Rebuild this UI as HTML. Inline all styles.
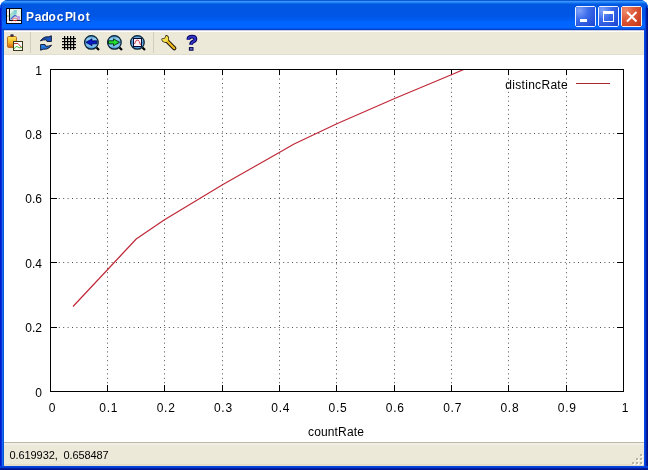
<!DOCTYPE html>
<html><head><meta charset="utf-8">
<style>
html,body{margin:0;padding:0;background:#fff;width:648px;height:470px;overflow:hidden}
svg{display:block;position:absolute;left:0;top:0;will-change:transform}
text{font-family:"Liberation Sans",sans-serif}
</style></head>
<body>
<svg width="648" height="470" viewBox="0 0 648 470">
<defs>
<linearGradient id="tg" x1="0" y1="0" x2="0" y2="30" gradientUnits="userSpaceOnUse">
<stop offset="0" stop-color="#0A5AD8"/>
<stop offset="0.0333" stop-color="#0A5AD8"/>
<stop offset="0.05" stop-color="#3A95FF"/>
<stop offset="0.0833" stop-color="#2282F8"/>
<stop offset="0.1167" stop-color="#0A6AEA"/>
<stop offset="0.15" stop-color="#0058E2"/>
<stop offset="0.5" stop-color="#0055E5"/>
<stop offset="0.68" stop-color="#005EF2"/>
<stop offset="0.72" stop-color="#0064FF"/>
<stop offset="0.92" stop-color="#0064FF"/>
<stop offset="0.95" stop-color="#0058F0"/>
<stop offset="0.97" stop-color="#0842C4"/>
<stop offset="1" stop-color="#0842C4"/>
</linearGradient>
<radialGradient id="bb" cx="0.2" cy="0.2" r="1" gradientUnits="objectBoundingBox">
<stop offset="0" stop-color="#7EA2FA"/>
<stop offset="0.45" stop-color="#3D6CEB"/>
<stop offset="1" stop-color="#1C48D4"/>
</radialGradient>
<radialGradient id="cb" cx="0.2" cy="0.2" r="1" gradientUnits="objectBoundingBox">
<stop offset="0" stop-color="#F08A6C"/>
<stop offset="0.45" stop-color="#DD5A38"/>
<stop offset="1" stop-color="#C8381A"/>
</radialGradient>
<linearGradient id="clip" x1="0" y1="0" x2="0" y2="1">
<stop offset="0" stop-color="#FAE858"/>
<stop offset="0.55" stop-color="#F2B428"/>
<stop offset="1" stop-color="#D86018"/>
</linearGradient>
<linearGradient id="rf1" x1="0" y1="0" x2="1" y2="1">
<stop offset="0" stop-color="#1A4AA0"/>
<stop offset="1" stop-color="#1C5CD0"/>
</linearGradient>
<linearGradient id="rf2" x1="0" y1="0" x2="1" y2="1">
<stop offset="0" stop-color="#3090F0"/>
<stop offset="1" stop-color="#1848B0"/>
</linearGradient>
<linearGradient id="lens" x1="0" y1="0" x2="0" y2="1">
<stop offset="0" stop-color="#2E7CC0"/>
<stop offset="0.25" stop-color="#9AD4F4"/>
<stop offset="0.5" stop-color="#4A98D8"/>
<stop offset="0.75" stop-color="#88C8F0"/>
<stop offset="1" stop-color="#3080C8"/>
</linearGradient>
</defs>
<!-- window body -->
<path d="M0,8 A8,8 0 0 1 8,0 L640,0 A8,8 0 0 1 648,8 L648,470 L0,470 Z" fill="#0855DD"/>
<path d="M0,8 A8,8 0 0 1 8,0 L640,0 A8,8 0 0 1 648,8 L648,30 L0,30 Z" fill="url(#tg)"/>
<!-- left border -->
<rect x="0" y="8" width="1" height="462" fill="#0019CF"/>
<rect x="1" y="5" width="1" height="465" fill="#0831D9"/>
<rect x="2" y="30" width="1" height="440" fill="#166AEE"/>
<rect x="3" y="30" width="1" height="440" fill="#0855DD"/>
<!-- right border -->
<rect x="644" y="30" width="1" height="440" fill="#0848E0"/>
<rect x="645" y="8" width="1" height="462" fill="#003BDA"/>
<rect x="646" y="6" width="1" height="464" fill="#001EA0"/>
<rect x="647" y="8" width="1" height="462" fill="#00138C"/>
<!-- bottom border -->
<rect x="0" y="466" width="648" height="1" fill="#0848E0"/>
<rect x="0" y="467" width="648" height="1" fill="#003BDA"/>
<rect x="0" y="468" width="648" height="1" fill="#001EA0"/>
<rect x="0" y="469" width="648" height="1" fill="#00138C"/>

<!-- toolbar -->
<rect x="4" y="30" width="640" height="25" fill="#ECE9D8"/>
<rect x="4" y="30" width="640" height="1" fill="#C8CCE0"/>
<rect x="4" y="31" width="640" height="1" fill="#FFFFFF"/>
<rect x="4" y="54" width="640" height="1" fill="#E2DFD0"/>
<!-- plot area -->
<rect x="4" y="55" width="640" height="387" fill="#FFFFFF"/>
<!-- status bar -->
<rect x="4" y="442" width="640" height="24" fill="#ECE9D8"/>
<rect x="4" y="442" width="640" height="1" fill="#BDB9A6"/>
<rect x="4" y="443" width="640" height="2" fill="#F2F0E6"/>
<rect x="4" y="464" width="640" height="2" fill="#E2DCC8"/>

<!-- title icon -->
<rect x="6.5" y="8.5" width="15" height="15" fill="#FAF4F6" stroke="#000818"/>
<rect x="10" y="9" width="11" height="11" fill="#E4F2E8"/>
<rect x="7" y="9" width="2" height="13" fill="#F4E0E8"/>
<rect x="7" y="10" width="1" height="1" fill="#FFFFFF"/><rect x="7" y="13" width="1" height="2" fill="#FFFFFF"/><rect x="7" y="17" width="1" height="2" fill="#FFFFFF"/>
<rect x="7" y="15" width="2" height="2" fill="#C8E0A0"/>
<path d="M10,19 L10,14 L14,10 L17,10 L17,14 L14,17 Z" fill="#A8E0D0"/>
<path d="M14,10 L17,10 L16,14 L13,15 Z" fill="#80D0D8"/>
<path d="M10.5,19.5 L13,17 L15,15.5 L17,16.5 L19.5,19" stroke="#4858D0" stroke-width="1.1" fill="none"/>
<path d="M16.5,16 L20,16 L20,20 L17.5,20 Z" fill="#C0A0E0"/>
<path d="M12,19.5 L15,18 L18,19.5" stroke="#E07080" stroke-width="1" fill="none"/>
<rect x="9" y="9" width="1" height="14" fill="#000"/>
<rect x="9" y="20" width="12" height="1" fill="#101010"/>
<rect x="13" y="20" width="4" height="1" fill="#C02020"/>
<rect x="7" y="21" width="14" height="2" fill="#F8F4FA"/>
<rect x="11" y="21" width="1" height="1" fill="#E0D0F0"/><rect x="15" y="21" width="1" height="1" fill="#F0D0D0"/>

<!-- title text -->
<text x="27.10 35.85 42.50 49.50 57.80 66.00 73.70 78.50 86.80" y="21.5" font-size="12" font-weight="bold" fill="#0A2A80" opacity="0.6">PadocPlot</text>
<text x="26.10 34.85 41.50 48.50 56.80 65.00 72.70 77.50 85.80" y="20.5" font-size="12" font-weight="bold" fill="#FFFFFF">PadocPlot</text>

<!-- title buttons -->
<g>
<path d="M576.5,6.5 h18 l1,1 v18 l-1,1 h-18 l-1,-1 v-18 z" fill="url(#bb)" stroke="#EAF2FF"/>
<rect x="580" y="19" width="7" height="3" fill="#FFFFFF"/>
<path d="M599.5,6.5 h18 l1,1 v18 l-1,1 h-18 l-1,-1 v-18 z" fill="url(#bb)" stroke="#EAF2FF"/>
<rect x="603.5" y="11.5" width="10" height="10" fill="none" stroke="#FFFFFF"/>
<rect x="603" y="11" width="11" height="3" fill="#FFFFFF"/>
<path d="M622.5,6.5 h18 l1,1 v18 l-1,1 h-18 l-1,-1 v-18 z" fill="url(#cb)" stroke="#F4F0F0"/>
<path d="M627,12 L636.5,21.5 M636.5,12 L627,21.5" stroke="#FFFFFF" stroke-width="2"/>
</g>

<!-- toolbar separators -->
<rect x="30" y="32" width="1" height="21" fill="#D2CEBD"/>
<rect x="153" y="32" width="1" height="21" fill="#D2CEBD"/>

<!-- icon 1 clipboard+chart -->
<rect x="7.5" y="36.5" width="9" height="11" rx="1.2" fill="url(#clip)" stroke="#B06818" stroke-width="0.9"/>
<rect x="10.3" y="34.3" width="3.4" height="2.4" rx="1" fill="#3A2A48"/>
<rect x="13.5" y="41.5" width="9" height="9" fill="#FFFFFF" stroke="#3A3A18"/>
<path d="M14,43.5 L18,43.5 L22,48" stroke="#C04030" fill="none"/>
<path d="M14,49 Q16,45 18,47 Q20,49 22,47" stroke="#40C040" fill="none"/>

<!-- icon 2 refresh -->
<path d="M40.3,40.8 L43,38.2 Q45,36.4 48.5,36.8 L51.4,35.8 L51.4,41.5 L47,41.5 L46.3,39.8 Q43.5,39.6 40.3,40.8 Z" fill="url(#rf1)" stroke="#0A1430" stroke-width="0.9" stroke-linejoin="round"/>
<path d="M51.7,45.2 L49,47.8 Q47,49.6 43.5,49.2 L40.6,50.2 L40.6,44.5 L45,44.5 L45.7,46.2 Q48.5,46.4 51.7,45.2 Z" fill="url(#rf2)" stroke="#0A1430" stroke-width="0.9" stroke-linejoin="round"/>

<!-- icon 3 grid -->
<g fill="#000000">
<rect x="64" y="36" width="1.2" height="14"/><rect x="67" y="36" width="1.2" height="14"/><rect x="70" y="36" width="1.2" height="14"/><rect x="73" y="36" width="1.2" height="14"/>
<rect x="62" y="38" width="14" height="1.2"/><rect x="62" y="41" width="14" height="1.2"/><rect x="62" y="44" width="14" height="1.2"/><rect x="62" y="47" width="14" height="1.2"/>
</g>

<!-- icon 4 zoom back -->
<path d="M96.5,47.5 L99,50" stroke="#000" stroke-width="2.2"/>
<circle cx="91.4" cy="42.4" r="6.8" fill="url(#lens)" stroke="#0C2438" stroke-width="1.3"/>
<path d="M86,42.3 L92,38.8 L92,40.8 L96.8,40.8 L96.8,43.8 L92,43.8 L92,45.8 Z" fill="#0818C8" stroke="#000850" stroke-width="0.7"/>

<!-- icon 5 zoom forward -->
<path d="M119.5,47.5 L122,50" stroke="#000" stroke-width="2.2"/>
<circle cx="114.4" cy="42.4" r="6.8" fill="url(#lens)" stroke="#0C2438" stroke-width="1.3"/>
<path d="M119.4,42.3 L113.5,38.8 L113.5,40.8 L108.5,40.8 L108.5,43.8 L113.5,43.8 L113.5,45.8 Z" fill="#20E030" stroke="#002000" stroke-width="0.8"/>

<!-- icon 6 zoom box -->
<path d="M142.5,47.5 L145,50" stroke="#000" stroke-width="2.2"/>
<circle cx="137.4" cy="42.4" r="6.8" fill="url(#lens)" stroke="#0C2438" stroke-width="1.3"/>
<rect x="133.5" y="38.5" width="8" height="8" fill="#FFF0F4" stroke="#000838" stroke-width="1"/>
<path d="M134.5,44 Q136,39 138,40 Q139.5,41 140.5,45" stroke="#C03040" fill="none" stroke-width="0.9"/>

<!-- icon 7 wrench -->
<g stroke-linecap="round" stroke-linejoin="round">
<path d="M167.3,41.2 L174.3,48.2" stroke="#1A1200" stroke-width="4.2"/>
<path d="M166.08,35.72 A3.2,3.2 0 1 1 162.03,39.25 L165.0,38.6 Z" fill="#F4DC40" stroke="#1A1200" stroke-width="1.3"/>
<path d="M166.5,40.4 L174.3,48.2" stroke="#EDB820" stroke-width="2.2"/>
<path d="M166.08,35.72 A3.2,3.2 0 1 1 162.03,39.25 L165.0,38.6 Z" fill="#F6E048"/>
</g>

<!-- icon 8 question -->
<path d="M188.5,39.8 L188.5,38.6 Q188.8,36.6 192,36.6 Q195.4,36.6 195.4,39 Q195.4,40.6 193.2,41.6 Q191.1,42.6 191.1,44.8" stroke="#000060" stroke-width="3.8" fill="none"/>
<path d="M188.5,39.8 L188.5,38.6 Q188.8,36.6 192,36.6 Q195.4,36.6 195.4,39 Q195.4,40.6 193.2,41.6 Q191.1,42.6 191.1,44.8" stroke="#3636C8" stroke-width="1.8" fill="none"/>
<rect x="189.4" y="47.6" width="3.6" height="2.6" fill="#7070C0" stroke="#000050" stroke-width="1"/>

<!-- PLOT -->
<g stroke="#000" stroke-width="1" shape-rendering="crispEdges" fill="none">
<!-- vertical dotted grid -->
<g stroke-dasharray="1 3.4" stroke="#505050" shape-rendering="auto">
<path d="M107.5,74.2 V386 M164.5,74.2 V386 M222.5,74.2 V386 M279.5,74.2 V386 M336.5,74.2 V386 M394.5,74.2 V386 M451.5,74.2 V386 M508.5,74.2 V386 M566.5,74.2 V386"/>
<path d="M58.8,133.5 H617 M58.8,198.5 H617 M58.8,262.5 H617 M58.8,327.5 H617"/>
</g>
<!-- ticks -->
<path d="M107.5,69 v6 M164.5,69 v6 M222.5,69 v6 M279.5,69 v6 M336.5,69 v6 M394.5,69 v6 M451.5,69 v6 M508.5,69 v6 M566.5,69 v6"/>
<path d="M107.5,391 v-6 M164.5,391 v-6 M222.5,391 v-6 M279.5,391 v-6 M336.5,391 v-6 M394.5,391 v-6 M451.5,391 v-6 M508.5,391 v-6 M566.5,391 v-6"/>
<path d="M50,133.5 h7 M50,198.5 h7 M50,262.5 h7 M50,327.5 h7"/>
<path d="M623,133.5 h-6 M623,198.5 h-6 M623,262.5 h-6 M623,327.5 h-6"/>
<rect x="50.5" y="69.5" width="573" height="322"/>
</g>
<!-- curve -->
<svg x="51" y="70" width="572" height="321" viewBox="51 70 572 321" overflow="hidden">
<polyline points="73,306.5 136.2,239 164.5,219.7 222.5,184.7 279.3,152.5 293.6,144.2 336.3,124 394.6,98.5 451.4,74.7 470,66.8" fill="none" stroke="#C02838" stroke-width="1.2"/>
</svg>
<!-- legend -->
<text x="505.3" y="88.5" font-size="12" fill="#000" letter-spacing="0.3">distincRate</text>
<path d="M576,83.5 H610" stroke="#A82830" stroke-width="1"/>

<!-- y labels -->
<g font-size="12" fill="#000" text-anchor="end">
<text x="42" y="75">1</text>
<text x="42" y="138.5">0.8</text>
<text x="42" y="203">0.6</text>
<text x="42" y="267.5">0.4</text>
<text x="42" y="332">0.2</text>
<text x="42" y="396.5">0</text>
</g>
<g font-size="12" fill="#000" text-anchor="middle">
<text x="52.2" y="411.5">0</text>
<text x="108.8" y="411.5" letter-spacing="0.75">0.1</text>
<text x="166.1" y="411.5" letter-spacing="0.75">0.2</text>
<text x="223.4" y="411.5" letter-spacing="0.75">0.3</text>
<text x="280.7" y="411.5" letter-spacing="0.75">0.4</text>
<text x="338.0" y="411.5" letter-spacing="0.75">0.5</text>
<text x="395.3" y="411.5" letter-spacing="0.75">0.6</text>
<text x="452.6" y="411.5" letter-spacing="0.75">0.7</text>
<text x="509.9" y="411.5" letter-spacing="0.75">0.8</text>
<text x="567.2" y="411.5" letter-spacing="0.75">0.9</text>
<text x="625.2" y="411.5">1</text>
</g>
<text x="308" y="436" font-size="12" fill="#000" letter-spacing="0.15">countRate</text>

<!-- status text -->
<text x="9.6" y="458.5" font-size="11" fill="#000" letter-spacing="-0.1" xml:space="preserve">0.619932,  0.658487</text>
<!-- resize grip -->
<g fill="#FFFFFF">
<rect x="641" y="455" width="2" height="2"/>
<rect x="637" y="459" width="2" height="2"/><rect x="641" y="459" width="2" height="2"/>
<rect x="633" y="463" width="2" height="2"/><rect x="637" y="463" width="2" height="2"/><rect x="641" y="463" width="2" height="2"/>
</g>
<g fill="#B8B49F">
<rect x="640" y="454" width="2" height="2"/>
<rect x="636" y="458" width="2" height="2"/><rect x="640" y="458" width="2" height="2"/>
<rect x="632" y="462" width="2" height="2"/><rect x="636" y="462" width="2" height="2"/><rect x="640" y="462" width="2" height="2"/>
</g>
</svg>
</body></html>
